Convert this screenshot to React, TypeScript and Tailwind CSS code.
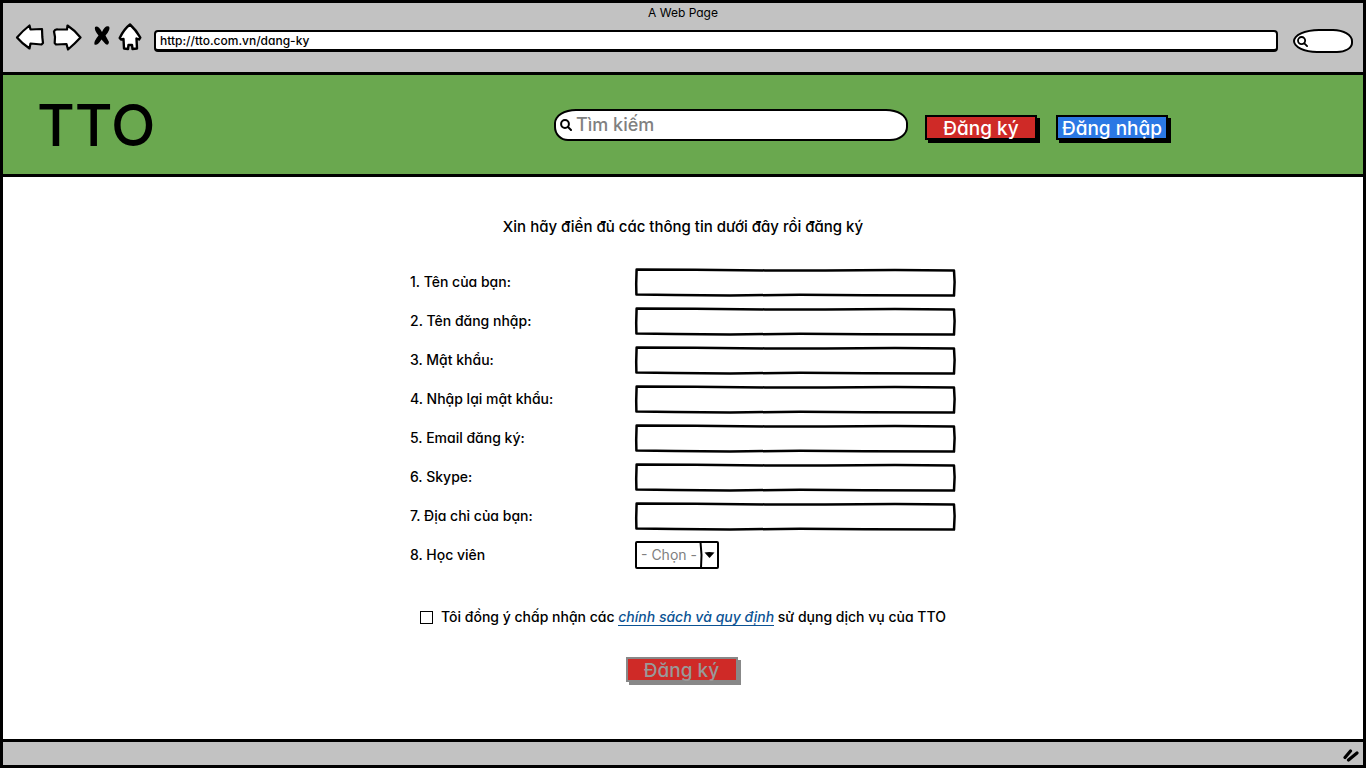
import React from "react";

type Field = { id: string; label: string; type: string };

const fields: Field[] = [
  { id: "name", label: "1. Tên của bạn:", type: "text" },
  { id: "username", label: "2. Tên đăng nhập:", type: "text" },
  { id: "password", label: "3. Mật khẩu:", type: "password" },
  { id: "confirm", label: "4. Nhập lại mật khẩu:", type: "password" },
  { id: "email", label: "5. Email đăng ký:", type: "email" },
  { id: "skype", label: "6. Skype:", type: "text" },
  { id: "address", label: "7. Địa chỉ của bạn:", type: "text" },
];

function SketchInput({ id, type }: { id: string; type: string }) {
  return (
    <div className="relative h-7 w-[321px]">
      <input id={id} name={id} type={type} className="size-full bg-white px-2 text-sm outline-none" />
      <svg
        className="pointer-events-none absolute inset-0 size-full overflow-visible"
        viewBox="0 0 321 28"
        preserveAspectRatio="none"
        fill="none"
        stroke="#000"
        strokeWidth="2.5"
        strokeLinejoin="round"
        aria-hidden="true"
      >
        <path d="M1.6 1.6 L60 1.7 L130 2.4 L190 2.4 L260 2 L319 2.5 L319.6 14 L319 27.6 L230 27.3 L165 26.8 L95 27.4 L40 27 L1.4 26.6 L1.2 16 Z" />
      </svg>
    </div>
  );
}

function Magnifier({ className }: { className: string }) {
  return (
    <svg className={className} viewBox="0 0 12 12" fill="none" stroke="#000" strokeWidth="2" strokeLinecap="round" aria-hidden="true">
      <circle cx="5" cy="5" r="3.9" />
      <path d="M8 8 L11 11" />
    </svg>
  );
}

function BrowserBar() {
  return (
    <div className="border-b-[3px] border-black bg-[#c2c2c2] pb-[19px]">
      <p className="text-center text-xs leading-5">A Web Page</p>
      <div className="flex items-start pr-[10px] pl-3">
        <button type="button" aria-label="Back" className="h-7 w-[30px]">
          <svg viewBox="0 0 30 28" className="size-full" fill="#fff" stroke="#000" strokeWidth="2.2" strokeLinejoin="round">
            <path d="M2 14.5 Q8 7.5 14.5 2.500 L15.500 6.500 L27 6 L27.300 14 L28 20 L26.500 21.500 L15.500 20.500 L14.500 25.500 Q7 20.500 2 14.5 Z" />
          </svg>
        </button>
        <button type="button" aria-label="Forward" className="ml-[7px] h-7 w-[30px]">
          <svg viewBox="0 0 30 28" className="size-full" fill="#fff" stroke="#000" strokeWidth="2.2" strokeLinejoin="round">
            <path d="M2 8.500 Q3 6 6 6.500 L15 6.500 L15.500 2.500 Q22.500 7 28.500 14.500 Q23 20.500 16 26.500 L14.500 21 L4 21.500 L2.700 20 L3 14 Z" />
          </svg>
        </button>
        <button type="button" aria-label="Stop" className="ml-[11px] h-7 w-[18px]">
          <svg viewBox="0 0 18 28" className="size-full" fill="#000">
            <path d="M2 4 Q5 2 9 9 Q12 2 16 3.500 Q18 6 12.500 12.500 L16 19 Q15.500 23 12.500 21 L8.500 16.500 Q4.500 23 1.500 21.500 Q0.500 18.500 5.500 12.500 Q1 7 2 4 Z" />
          </svg>
        </button>
        <button type="button" aria-label="Home" className="ml-[7px] h-7 w-6">
          <svg viewBox="0 0 24 28" className="size-full" fill="#fff" stroke="#000" strokeWidth="2.4" strokeLinejoin="round">
            <path d="M12 1.500 Q18 7 22.300 14.500 L21 16.500 L18.500 15.500 L19 25.500 L14.500 26 L14 22 L10.500 22 L10 26 L6 25.500 L5.500 16 L3 16.500 L1.700 15 Q6 6 12 1.500 Z" />
          </svg>
        </button>
        <div className="mt-[7px] ml-3 h-[22px] flex-1">
          <input
            aria-label="Address"
            defaultValue="http://tto.com.vn/dang-ky"
            className="block size-full rounded-sm border-2 border-b-[3px] border-black bg-white px-1 text-xs font-medium outline-none"
          />
        </div>
        <label className="mt-1.5 ml-[15px] flex h-6 w-[60px] items-center border-2 border-black bg-white [border-radius:26px_20px_16px_24px/12px_12px_10px_12px]">
          <Magnifier className="ml-0.5 size-[11px] shrink-0" />
          <input aria-label="Web search" className="w-full bg-transparent text-xs outline-none" />
        </label>
      </div>
    </div>
  );
}

function SiteHeader() {
  return (
    <header className="flex h-[102px] shrink-0 items-center justify-between border-b-[3px] border-black bg-[#6aa84f] pr-[195px] pl-[34px]">
      <h1 className="text-[58px] leading-none font-medium">TTO</h1>
      <div className="flex items-center">
        <label className="flex h-8 w-[354px] items-center border-2 border-black bg-white [border-radius:22px_22px_18px_14px/14px_14px_14px_14px]">
          <Magnifier className="ml-1 size-3 shrink-0" />
          <input
            aria-label="Tìm kiếm"
            placeholder="Tìm kiếm"
            className="w-full bg-transparent px-1 text-lg leading-6 font-medium outline-none placeholder:text-[#808080] placeholder:opacity-100"
          />
        </label>
        <button type="button" className="mt-1.5 ml-[17px] h-[25px] w-28 border-2 border-black bg-[#cf2a27] pt-0.5 text-[19px] leading-5 font-medium whitespace-nowrap text-white shadow-[3px_3px_0_#000]">
          Đăng ký
        </button>
        <button type="button" className="mt-1.5 ml-[19px] h-[25px] w-28 border-2 border-black bg-[#2b78e4] pt-0.5 text-[19px] leading-5 font-medium whitespace-nowrap text-white shadow-[3px_3px_0_#000]">
          Đăng nhập
        </button>
      </div>
    </header>
  );
}

function RegisterForm() {
  return (
    <form className="mx-auto w-[546px] pt-[38px] text-sm leading-5">
      <h2 className="text-center text-[15px] leading-6 font-medium whitespace-nowrap">
        Xin hãy điền đủ các thông tin dưới đây rồi đăng ký
      </h2>
      <div className="mt-[29px] flex flex-col gap-[11px]">
        {fields.map((f) => (
          <div key={f.id} className="flex h-7 items-center justify-between">
            <label htmlFor={f.id} className="font-medium">
              {f.label}
            </label>
            <SketchInput id={f.id} type={f.type} />
          </div>
        ))}
        <div className="flex h-7 items-center">
          <label htmlFor="student" className="w-[225px] font-medium">
            8. Học viên
          </label>
          <div className="relative h-7 w-[84px]">
            <select id="student" className="size-full appearance-none rounded-xs border-2 border-black bg-white pl-1 text-sm text-[#808080] outline-none">
              <option>- Chọn -</option>
            </select>
            <svg className="pointer-events-none absolute inset-y-0 right-0 h-full w-5" viewBox="0 0 20 28" aria-hidden="true">
              <path d="M1.500 1 L2.500 14 L2 27" fill="none" stroke="#000" strokeWidth="2" />
              <path d="M5.500 11.500 Q10 10.500 15.500 11.500 L10.500 17 Z" />
            </svg>
          </div>
        </div>
      </div>
      <div className="mt-[38px] flex items-center justify-center whitespace-nowrap">
        <input
          id="agree"
          type="checkbox"
          className="mr-2 size-[13px] shrink-0 appearance-none border border-black bg-white checked:bg-black"
        />
        <label htmlFor="agree" className="font-medium">
          Tôi đồng ý chấp nhận các{" "}
          <a href="#terms" className="border-b border-[#0b5394] text-[#0b5394] italic">
            chính sách và quy định
          </a>{" "}
          sử dụng dịch vụ của TTO
        </label>
      </div>
      <div className="mt-[30px] flex justify-center pr-[3px]">
        <button
          type="button"
          disabled
          className="h-[25px] w-28 border-2 border-[#888888] bg-[#cf2a27] pt-0.5 text-[19px] leading-5 font-medium text-[#999999] shadow-[3px_3px_0_#888888]"
        >
          Đăng ký
        </button>
      </div>
    </form>
  );
}

export default function App() {
  return (
    <div className="flex min-h-screen flex-col border-[3px] border-black bg-white text-black [font-family:Inter,'Noto_Sans',sans-serif] [font-feature-settings:'cv11','ss03']">
      <BrowserBar />
      <SiteHeader />
      <main className="flex-1 pb-6">
        <RegisterForm />
      </main>
      <footer className="flex h-[26px] shrink-0 items-center justify-end border-t-[3px] border-black bg-[#c2c2c2] pt-0.5 pr-1">
        <svg className="h-3.5 w-4" viewBox="0 0 16 14" fill="none" stroke="#000" strokeWidth="3.2" strokeLinecap="round" aria-hidden="true">
          <path d="M2 9.500 L7.500 3 M5.500 12 L14 5" />
        </svg>
      </footer>
    </div>
  );
}
